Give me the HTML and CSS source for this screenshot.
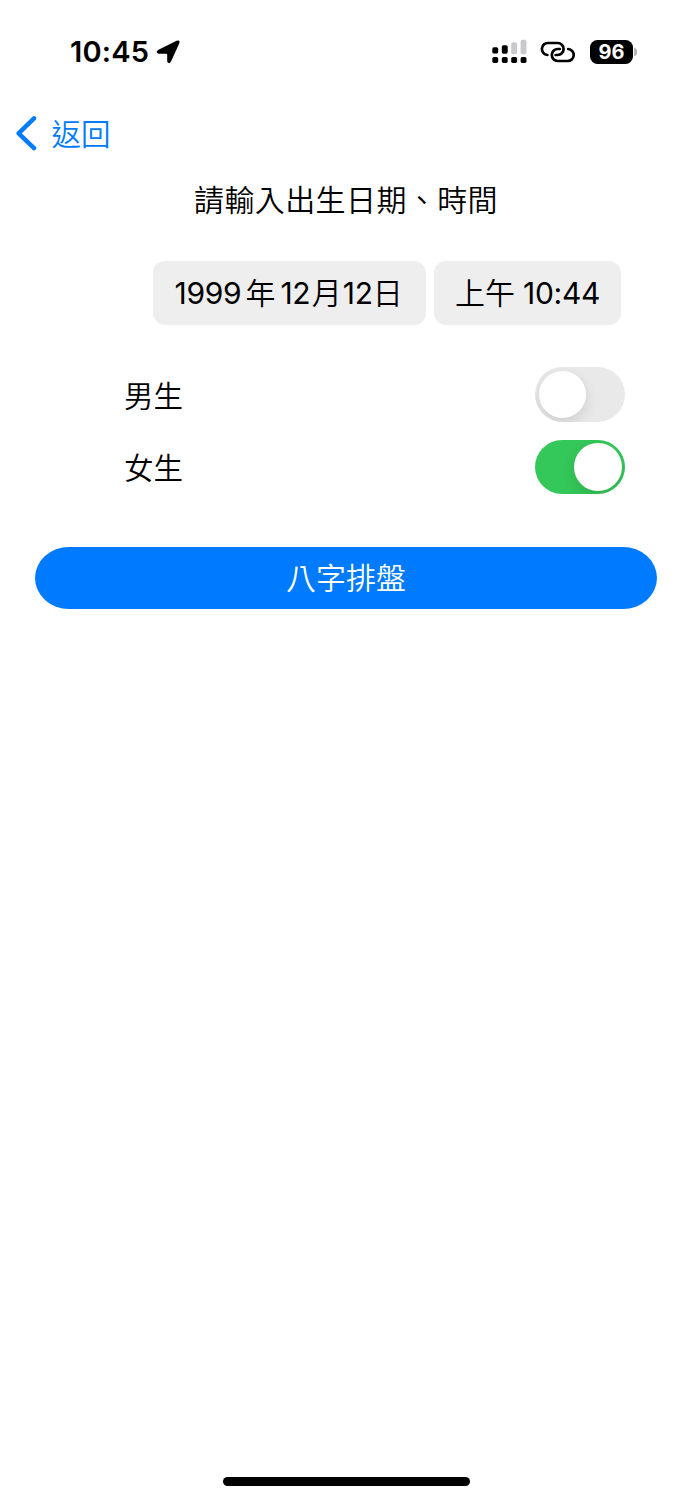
FILE: index.html
```html
<!DOCTYPE html>
<html lang="zh-Hant">
<head>
<meta charset="utf-8">
<title>八字排盤</title>
<link rel="stylesheet" href="styles.css">
</head>
<body>
<div class="screen">
  <header class="status">
    <span class="clock">10:45</span>
    <svg class="location" width="26" height="26" viewBox="0 0 26 26"><path d="M21.6 1.7 Q25.6 .4 24.2 4.4 L16 22.6 Q14.2 25.8 12.2 22.8 V15.6 Q12.2 14.8 11.5 14.8 H3.6 Q0 13.4 3 11 Z"/></svg>
    <svg class="signal" width="35" height="26" viewBox="0 0 35 26">
      <g fill="#c9c9cb"><rect x="19.2" y="3.2" width="5.9" height="12" rx="2"/><rect x="28.6" y="0.7" width="5.9" height="14.5" rx="2"/></g>
      <rect x=".3" y="8.3" width="5.9" height="6.3" rx="1.7"/><rect x="9.8" y="6.2" width="5.9" height="8.6" rx="1.7"/>
      <rect x=".3" y="18" width="5.9" height="6" rx="1.7"/><rect x="9.8" y="18" width="5.9" height="6" rx="1.7"/><rect x="19.2" y="18" width="5.9" height="6" rx="1.7"/><rect x="28.6" y="18" width="5.9" height="6" rx="1.7"/>
    </svg>
    <svg class="hotspot" width="36" height="22" viewBox="0 0 36 22" fill="none" stroke="#000" stroke-width="2.7" stroke-linecap="round">
      <path d="M7.4 14 A6 6 0 0 1 8.4 2 H17.6 A6 6 0 0 1 17.6 14 H15.6"/>
      <path d="M28.2 8 A6 6 0 0 1 27.2 20 H17.8 A6 6 0 0 1 17.8 8 H19.8"/>
    </svg>
    <div class="battery"><span class="level">96</span><i class="tip"></i></div>
  </header>
  <nav class="nav">
    <a class="back">
      <svg width="22" height="36" viewBox="0 0 22 36"><path d="M18 3.4 L2.6 18.3 L18 33.2" fill="none" stroke="#007aff" stroke-width="4.4" stroke-linecap="round" stroke-linejoin="round"/></svg>
      <span>返回</span>
    </a>
  </nav>
  <main>
    <h1 class="title">請輸入出生日期、時間</h1>
    <div class="pickers">
      <div class="chip date"><span class="num">1999</span><span class="year">年</span><span class="num">12</span><span class="month">月</span><span class="num">12</span><span class="day">日</span></div>
      <div class="chip time"><span class="half">上午</span><span class="num">10:44</span></div>
    </div>
    <div class="options">
      <div class="option"><span>男生</span><div class="switch"><i class="knob"></i></div></div>
      <div class="option"><span>女生</span><div class="switch on"><i class="knob"></i></div></div>
    </div>
    <button class="submit">八字排盤</button>
  </main>
  <footer class="home"></footer>
</div>
</body>
</html>
```
FILE: styles.css
```css
* { box-sizing: border-box; }
body { margin: 0; background: #fff; color: #000; font-family: "Inter", "Noto Sans CJK TC", sans-serif; font-size: 30px; font-weight: 350; }
svg { display: block; flex: none; }
.screen { width: 692px; height: 1500px; display: flex; flex-direction: column; }
.status { height: 104px; display: flex; align-items: center; padding-left: 70px; }
.clock { width: 80px; font-size: 29px; font-weight: 600; line-height: 40px; letter-spacing: .2px; white-space: nowrap; }
.location { margin-left: 5px; }
.signal { margin-left: 311px; }
.hotspot { margin-left: 13px; }
.battery { margin-left: 14px; display: flex; align-items: center; gap: 1px; }
.level { width: 43px; height: 24px; border-radius: 7.5px; background: #000; color: #fff; font-size: 20px; font-weight: 700; line-height: 24px; text-align: center; }
.tip { width: 3px; height: 8px; border-radius: 0 3px 3px 0; background: #b5b5b5; }
.nav { height: 58px; padding-left: 16px; display: flex; align-items: center; }
.back { display: flex; align-items: center; gap: 13.5px; color: #007aff; font-size: 29.5px; line-height: 44px; }
.back span { margin-top: 1px; }
main { display: flex; flex-direction: column; }
.title { margin: 16px 0 0; height: 44px; font-size: 30px; font-weight: inherit; line-height: 44px; letter-spacing: .4px; text-align: center; }
.pickers { margin: 39px 0 0 152.6px; display: flex; gap: 7.5px; }
.chip { height: 63.5px; border-radius: 12px; background: #eee; display: flex; align-items: center; line-height: 44px; white-space: nowrap; }
.num { font-weight: 380; letter-spacing: -.3px; }
.date { width: 273.5px; padding-left: 22px; }
.time { width: 187.5px; padding-left: 21.5px; }
.year { margin: 0 5px 0 4px; }
.month { margin: 0 1px 0 1.5px; }
.day { margin-left: 0; }
.half { margin-right: 8px; }
.options { margin: 42.5px 67px 0 124px; display: flex; flex-direction: column; gap: 18px; }
.option { height: 54.5px; display: flex; align-items: center; justify-content: space-between; font-size: 29.5px; }
.option > span { margin-top: -1px; }
.switch { width: 90px; height: 54.5px; padding: 3.5px; border-radius: 28px; background: #e9e9ea; display: flex; overflow: hidden; }
.on { justify-content: flex-end; background: #34c759; }
.knob { width: 47.5px; height: 47.5px; border-radius: 50%; background: #fff; box-shadow: 0 5px 14px rgba(0,0,0,.12); }
.submit { margin: 53px 35.5px 0 35.4px; height: 61.5px; border: 0; border-radius: 34px / 31px; background: #007aff; color: #fff; font: inherit; line-height: 44px; padding: 0; }
.home { width: 247px; height: 8.5px; margin: auto auto 14.5px; border-radius: 5px; background: #000; }
```
